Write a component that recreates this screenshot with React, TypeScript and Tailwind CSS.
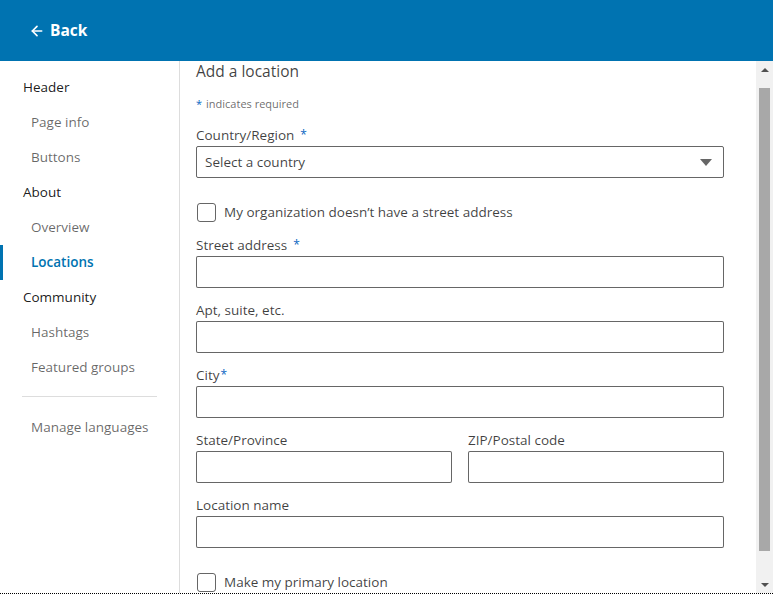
import React from 'react';
import { ArrowLeft } from 'lucide-react';

const navItems = [
  { name: 'Header', type: 'section' },
  { name: 'Page info', type: 'item' },
  { name: 'Buttons', type: 'item' },
  { name: 'About', type: 'section' },
  { name: 'Overview', type: 'item' },
  { name: 'Locations', type: 'item', active: true },
  { name: 'Community', type: 'section' },
  { name: 'Hashtags', type: 'item' },
  { name: 'Featured groups', type: 'item' },
];

const Star = ({ tight }: { tight?: boolean }) => (
  <span className={`text-[#0a66c2] text-[12px] ${tight ? 'ml-px' : 'ml-1.5'} align-top`}>*</span>
);

const Field = ({ label, required, tight }: { label: string; required?: boolean; tight?: boolean }) => (
  <div className="mb-3 flex flex-col">
    <label className="h-5 text-[13.5px] leading-5 text-[#000000bf]">
      {label}
      {required && <Star tight={tight} />}
    </label>
    <div className="mt-px h-8 rounded-[2px] border border-[#00000099] bg-white" />
  </div>
);

const Checkbox = ({ label }: { label: string }) => (
  <div className="flex h-5 items-center">
    <div className="ml-px h-[19px] w-[19px] rounded-[3px] border border-[#00000099]" />
    <span className="ml-[8px] text-[13.5px] leading-5 text-[#000000bf]">{label}</span>
  </div>
);

const App = () => {
  return (
    <div
      className="flex h-[594px] w-[773px] flex-col overflow-hidden border-b border-dotted border-black bg-white"
      style={{ fontFamily: '"Open Sans", "Noto Sans", sans-serif' }}
    >
      <header className="flex h-[61px] shrink-0 items-center bg-[#0073b1] pl-[29px] text-white">
        <ArrowLeft className="h-4 w-4" strokeWidth={2.5} />
        <span className="ml-[5px] text-[15.5px] font-bold">Back</span>
      </header>

      <div className="flex min-h-0 flex-1">
        <aside className="w-[180px] shrink-0 border-r border-[#dddddd] pt-[9px]">
          {navItems.map((item) => (
            <div
              key={item.name}
              className={`flex h-[35px] items-center text-[13.5px] ${
                item.active ? 'border-l-[3px] border-[#0073b1] pl-[28px] font-semibold text-[#0073b1]' : ''
              } ${!item.active && item.type === 'section' ? 'pl-[23px] text-[#000000e6]' : ''} ${
                !item.active && item.type === 'item' ? 'pl-[31px] text-[#00000099]' : ''
              }`}
            >
              {item.name}
            </div>
          ))}
          <div className="mx-[22px] mt-[11px] border-t border-[#dddddd]" />
          <div className="mt-[13px] flex h-[35px] items-center pl-[31px] text-[13.5px] text-[#00000099]">
            Manage languages
          </div>
        </aside>

        <main className="flex min-w-0 flex-1">
          <div className="flex-1 overflow-hidden pl-[16px] pr-[32px]">
            <h2 className="h-5 text-[15.5px] leading-5 text-[#000000bf]">Add a location</h2>
            <p className="mt-[15px] h-4 text-[11px] leading-4 text-[#00000099]">
              <span className="mr-1 text-[#0a66c2]">*</span>indicates required
            </p>

            <div className="mt-[13px] flex flex-col">
              <label className="h-5 text-[13.5px] leading-5 text-[#000000bf]">
                Country/Region
                <Star />
              </label>
              <div className="mt-px flex h-8 items-center justify-between rounded-[2px] border border-[#00000099] pl-2 pr-[11px]">
                <span className="text-[13.5px] text-[#000000bf]">Select a country</span>
                <svg width="12" height="7" viewBox="0 0 12 7">
                  <path d="M0 0h12L6 7z" fill="#666" />
                </svg>
              </div>
            </div>

            <div className="mt-6">
              <Checkbox label="My organization doesn’t have a street address" />
            </div>

            <div className="mt-[13px]">
              <Field label="Street address" required />
              <Field label="Apt, suite, etc." />
              <Field label="City" required tight />
              <div className="grid grid-cols-2 gap-4">
                <Field label="State/Province" />
                <Field label="ZIP/Postal code" />
              </div>
              <Field label="Location name" />
            </div>

            <div className="mt-6">
              <Checkbox label="Make my primary location" />
            </div>
          </div>

          <div className="flex w-[17px] shrink-0 flex-col items-center bg-[#f1f1f1]">
            <div className="flex h-[17px] w-full items-center justify-center">
              <svg width="8" height="4" viewBox="0 0 8 4">
                <path d="M0 4h8L4 0z" fill="#505050" />
              </svg>
            </div>
            <div className="mt-[10px] h-[463px] w-[11px] bg-[#a8a8a8]" />
            <div className="flex-1" />
            <div className="flex h-[17px] w-full items-center justify-center">
              <svg width="8" height="4" viewBox="0 0 8 4">
                <path d="M0 0h8L4 4z" fill="#505050" />
              </svg>
            </div>
          </div>
        </main>
      </div>
    </div>
  );
};

export default App;
